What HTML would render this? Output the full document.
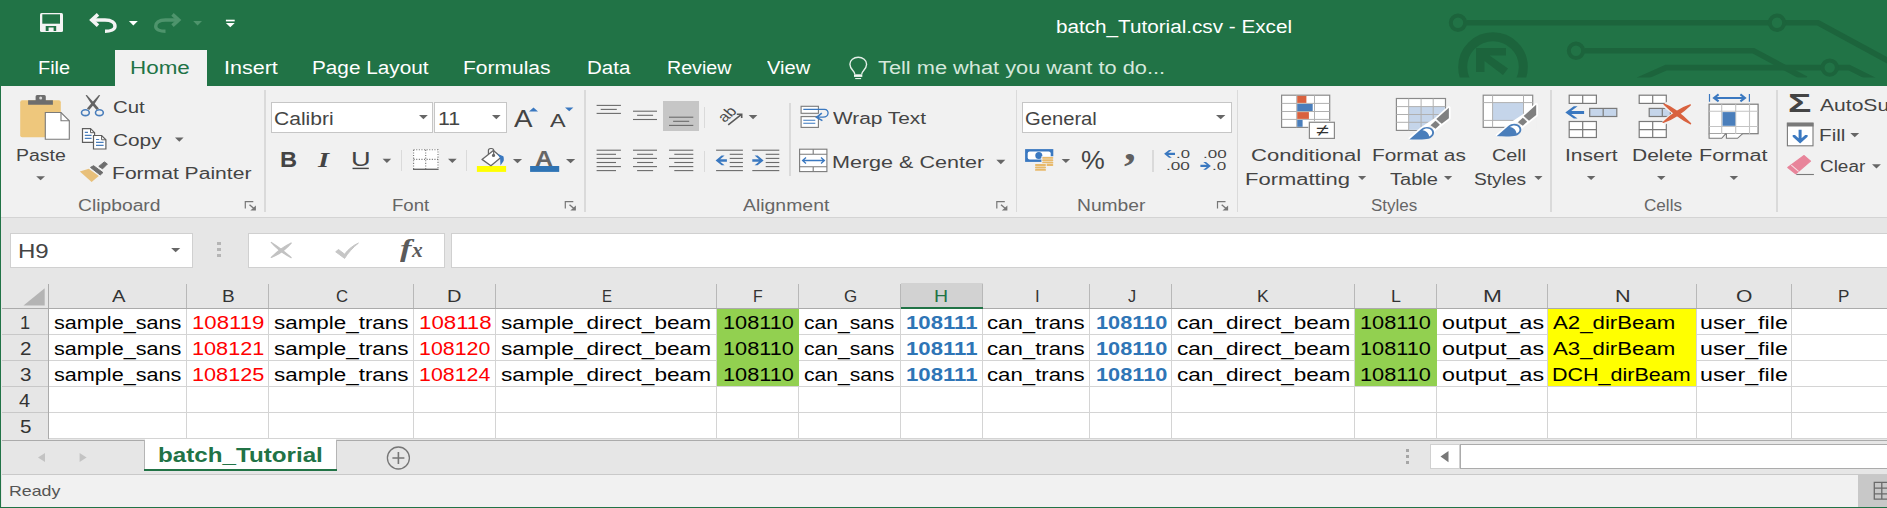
<!DOCTYPE html>
<html lang="en"><head><meta charset="utf-8"><title>batch_Tutorial.csv - Excel</title>
<style>
html,body{margin:0;padding:0}
html{overflow:hidden;width:1887px;height:508px}
body{width:1887px;height:508px;overflow:hidden;background:#e6e6e6;position:relative;font-family:"Liberation Sans", sans-serif}
.t{position:absolute;white-space:pre;line-height:1;transform-origin:0 0;display:block}
.app{position:absolute;left:0;top:0;width:1887px;height:508px;overflow:hidden;background:#e6e6e6}
.a{position:absolute}
svg{position:absolute;overflow:visible}

.sep{position:absolute;width:1.6px;background:#dadada}
.box{position:absolute;background:#fff;border:1px solid #c6c6c6;box-sizing:border-box}

</style></head><body>
<div class="app">
<div class="a" style="left:0px;top:0px;width:1887.00px;height:86.00px;background:#217346;"></div>
<div class="a" style="left:0px;top:86px;width:1887.00px;height:131.00px;background:#f1f1f1;"></div>
<div class="a" style="left:0px;top:217px;width:1887.00px;height:1.00px;background:#d4d4d4;"></div>
<div class="a" style="left:115px;top:50px;width:92.00px;height:37.00px;background:#f1f1f1;"></div>
<div class="sep" style="left:264.4px;top:90px;height:122px"></div>
<div class="sep" style="left:584.3px;top:90px;height:122px"></div>
<div class="sep" style="left:1015.8px;top:90px;height:122px"></div>
<div class="sep" style="left:1236.5px;top:90px;height:122px"></div>
<div class="sep" style="left:1550.4px;top:90px;height:122px"></div>
<div class="sep" style="left:1776.2px;top:90px;height:122px"></div>
<div class="sep" style="left:400.5px;top:150px;height:21.0px"></div>
<div class="sep" style="left:465.8px;top:150px;height:21.0px"></div>
<div class="sep" style="left:703.7px;top:107px;height:20.5px"></div>
<div class="sep" style="left:703.7px;top:151px;height:21.0px"></div>
<div class="sep" style="left:789.2px;top:103.4px;height:72.3px"></div>
<div class="sep" style="left:1152.0px;top:150.3px;height:21.4px"></div>
<div class="box" style="left:270.6px;top:102.2px;width:162.2px;height:31px"></div>
<div class="box" style="left:434px;top:102.2px;width:73px;height:31px"></div>
<div class="box" style="left:1021.6px;top:102.2px;width:210.6px;height:31px"></div>
<div class="a" style="left:663px;top:101.3px;width:36.00px;height:30.20px;background:#c6c6c6;"></div>
<div class="box" style="left:9.7px;top:233.2px;width:183.3px;height:34.4px;border-color:#d0d0d0"></div>
<div class="box" style="left:247.7px;top:233.2px;width:197.8px;height:34.4px;border-color:#d0d0d0"></div>
<div class="box" style="left:450.6px;top:233.2px;width:1450px;height:34.4px;border-color:#d0d0d0"></div>
<div class="a" style="left:217.3px;top:241.9px;width:3.60px;height:3.00px;background:#b5b5b5;"></div>
<div class="a" style="left:217.3px;top:247.8px;width:3.60px;height:3.00px;background:#b5b5b5;"></div>
<div class="a" style="left:217.3px;top:253.8px;width:3.60px;height:3.00px;background:#b5b5b5;"></div>
<div class="a" style="left:0px;top:283px;width:1887.00px;height:26.00px;background:#e6e6e6;"></div>
<div class="a" style="left:2px;top:309px;width:1885.00px;height:130.00px;background:#fff;"></div>
<div class="a" style="left:2px;top:309px;width:46.00px;height:130.00px;background:#e6e6e6;"></div>
<div class="a" style="left:900.5px;top:283.3px;width:82.50px;height:25.20px;background:#d2d2d2;"></div>
<div class="a" style="left:186px;top:309px;width:1.00px;height:130.00px;background:#d4d4d4;"></div>
<div class="a" style="left:268px;top:309px;width:1.00px;height:130.00px;background:#d4d4d4;"></div>
<div class="a" style="left:413px;top:309px;width:1.00px;height:130.00px;background:#d4d4d4;"></div>
<div class="a" style="left:495px;top:309px;width:1.00px;height:130.00px;background:#d4d4d4;"></div>
<div class="a" style="left:716px;top:309px;width:1.00px;height:130.00px;background:#d4d4d4;"></div>
<div class="a" style="left:798px;top:309px;width:1.00px;height:130.00px;background:#d4d4d4;"></div>
<div class="a" style="left:900px;top:309px;width:1.00px;height:130.00px;background:#d4d4d4;"></div>
<div class="a" style="left:982px;top:309px;width:1.00px;height:130.00px;background:#d4d4d4;"></div>
<div class="a" style="left:1089px;top:309px;width:1.00px;height:130.00px;background:#d4d4d4;"></div>
<div class="a" style="left:1171px;top:309px;width:1.00px;height:130.00px;background:#d4d4d4;"></div>
<div class="a" style="left:1354px;top:309px;width:1.00px;height:130.00px;background:#d4d4d4;"></div>
<div class="a" style="left:1436px;top:309px;width:1.00px;height:130.00px;background:#d4d4d4;"></div>
<div class="a" style="left:1547px;top:309px;width:1.00px;height:130.00px;background:#d4d4d4;"></div>
<div class="a" style="left:1696px;top:309px;width:1.00px;height:130.00px;background:#d4d4d4;"></div>
<div class="a" style="left:1791px;top:309px;width:1.00px;height:130.00px;background:#d4d4d4;"></div>
<div class="a" style="left:49px;top:334px;width:1838.00px;height:1.00px;background:#d4d4d4;"></div>
<div class="a" style="left:2px;top:334px;width:46.00px;height:1.00px;background:#c8c8c8;"></div>
<div class="a" style="left:49px;top:360px;width:1838.00px;height:1.00px;background:#d4d4d4;"></div>
<div class="a" style="left:2px;top:360px;width:46.00px;height:1.00px;background:#c8c8c8;"></div>
<div class="a" style="left:49px;top:386px;width:1838.00px;height:1.00px;background:#d4d4d4;"></div>
<div class="a" style="left:2px;top:386px;width:46.00px;height:1.00px;background:#c8c8c8;"></div>
<div class="a" style="left:49px;top:412px;width:1838.00px;height:1.00px;background:#d4d4d4;"></div>
<div class="a" style="left:2px;top:412px;width:46.00px;height:1.00px;background:#c8c8c8;"></div>
<div class="a" style="left:186px;top:284px;width:1.00px;height:24.00px;background:#b8b8b8;"></div>
<div class="a" style="left:268px;top:284px;width:1.00px;height:24.00px;background:#b8b8b8;"></div>
<div class="a" style="left:413px;top:284px;width:1.00px;height:24.00px;background:#b8b8b8;"></div>
<div class="a" style="left:495px;top:284px;width:1.00px;height:24.00px;background:#b8b8b8;"></div>
<div class="a" style="left:716px;top:284px;width:1.00px;height:24.00px;background:#b8b8b8;"></div>
<div class="a" style="left:798px;top:284px;width:1.00px;height:24.00px;background:#b8b8b8;"></div>
<div class="a" style="left:900px;top:284px;width:1.00px;height:24.00px;background:#b8b8b8;"></div>
<div class="a" style="left:982px;top:284px;width:1.00px;height:24.00px;background:#b8b8b8;"></div>
<div class="a" style="left:1089px;top:284px;width:1.00px;height:24.00px;background:#b8b8b8;"></div>
<div class="a" style="left:1171px;top:284px;width:1.00px;height:24.00px;background:#b8b8b8;"></div>
<div class="a" style="left:1354px;top:284px;width:1.00px;height:24.00px;background:#b8b8b8;"></div>
<div class="a" style="left:1436px;top:284px;width:1.00px;height:24.00px;background:#b8b8b8;"></div>
<div class="a" style="left:1547px;top:284px;width:1.00px;height:24.00px;background:#b8b8b8;"></div>
<div class="a" style="left:1696px;top:284px;width:1.00px;height:24.00px;background:#b8b8b8;"></div>
<div class="a" style="left:1791px;top:284px;width:1.00px;height:24.00px;background:#b8b8b8;"></div>
<div class="a" style="left:2px;top:308px;width:1885.00px;height:1.00px;background:#ababab;"></div>
<div class="a" style="left:48px;top:284px;width:1.30px;height:155.00px;background:#ababab;"></div>
<div class="a" style="left:900.5px;top:306.6px;width:82.50px;height:2.40px;background:#217346;"></div>
<div class="a" style="left:717.2px;top:309px;width:81.60px;height:77.30px;background:#92d050;"></div>
<div class="a" style="left:1354.8px;top:309px;width:81.90px;height:77.30px;background:#92d050;"></div>
<div class="a" style="left:1548px;top:309px;width:148.20px;height:77.30px;background:#ffff00;"></div>
<svg style="left:23px;top:287.5px" width="22" height="18"><path d="M21.7 0.3V17.5H0.5Z" fill="#b4b4b4"/></svg>
<div class="a" style="left:49px;top:438px;width:1838.00px;height:1.00px;background:#d4d4d4;"></div>
<div class="a" style="left:2px;top:439px;width:1885.00px;height:35.50px;background:#e6e6e6;"></div>
<div class="a" style="left:2px;top:439.8px;width:1885.00px;height:1.10px;background:#ababab;"></div>
<div class="a" style="left:145px;top:439px;width:191.30px;height:30.00px;background:#fff;"></div>
<div class="a" style="left:144.3px;top:440px;width:0.90px;height:29.00px;background:#b5b5b5;"></div>
<div class="a" style="left:336px;top:440px;width:0.90px;height:29.00px;background:#b5b5b5;"></div>
<div class="a" style="left:144.3px;top:468.8px;width:192.60px;height:2.00px;background:#217346;"></div>
<div class="a" style="left:2px;top:474px;width:1885.00px;height:1.00px;background:#c9c9c9;"></div>
<div class="a" style="left:2px;top:475px;width:1885.00px;height:31.50px;background:#f1f1f1;"></div>
<div class="a" style="left:0px;top:506.7px;width:1887.00px;height:1.30px;background:#217346;"></div>
<div class="a" style="left:1857.7px;top:475px;width:29.30px;height:31.50px;background:#c8c8c8;"></div>
<div class="box" style="left:1430.2px;top:444.3px;width:29.8px;height:24.4px;border-color:#d0d0d0"></div>
<div class="box" style="left:1460.3px;top:444.3px;width:440px;height:24.4px;border-color:#ababab"></div>
<div class="a" style="left:1406px;top:448.8px;width:3.00px;height:2.80px;background:#a6a6a6;"></div>
<div class="a" style="left:1406px;top:455.0px;width:3.00px;height:2.80px;background:#a6a6a6;"></div>
<div class="a" style="left:1406px;top:461.20000000000005px;width:3.00px;height:2.80px;background:#a6a6a6;"></div>
<div class="a" style="left:0px;top:86px;width:1.30px;height:422.00px;background:#217346;"></div>
<svg style="left:0;top:0" width="1887" height="508" viewBox="0 0 1887 508"><path d="M41.5 13h20a1.5 1.5 0 0 1 1.5 1.5v16a1.5 1.5 0 0 1-1.5 1.5h-20a1.5 1.5 0 0 1-1.5-1.5v-16a1.5 1.5 0 0 1 1.5-1.5z" fill="#f4f4f4"/>
<rect x="42.3" y="14.3" width="17.7" height="9.4" fill="#217346"/>
<rect x="45.7" y="26" width="10.5" height="5" fill="#217346"/><rect x="48.6" y="27.5" width="5" height="4" fill="#f4f4f4"/>
<path d="M98 14.3L91.8 20L98 25.7" fill="none" stroke="#f4f4f4" stroke-width="3.6" stroke-linejoin="miter"/>
<path d="M92.5 20H105C112 20 115 23 115 26.2C115 29.5 110.5 31.3 105 31.3" fill="none" stroke="#f4f4f4" stroke-width="3.4"/>
<path d="M128.9 21.1H137.8L133.35 25.4Z" fill="#fff"/>
<path d="M172.5 14.3L178.7 20L172.5 25.7" fill="none" stroke="#4e946c" stroke-width="3.6"/>
<path d="M178 20H165.5C158.5 20 155.7 23 155.7 26.2C155.7 29.5 160 31.3 165.5 31.3" fill="none" stroke="#4e946c" stroke-width="3.4"/>
<path d="M193.2 21.1H202L197.60 25.4Z" fill="#4e946c"/>
<rect x="225.9" y="19.7" width="8.8" height="1.7" fill="#fff"/>
<path d="M225.9 23H234.7L230.30 27.3Z" fill="#fff"/>
<rect x="20.2" y="100.2" width="40.6" height="37" rx="2" fill="#eec77c"/>
<path d="M35.6 100.2V96.4a1.5 1.5 0 0 1 1.5-1.5h7.2a1.5 1.5 0 0 1 1.5 1.5V100.2H52.9V104.7H28.1V100.2Z" fill="#6d6d6d"/>
<circle cx="40.7" cy="98" r="1.5" fill="#d8d8d8"/>
<path d="M45.3 112.5H61L69.3 120.8V139.3H45.3Z" fill="#fff" stroke="#7a7a7a" stroke-width="1.1"/>
<path d="M61 112.5V120.8H69.3" fill="none" stroke="#7a7a7a" stroke-width="1.1"/>
<path d="M36.2 176.2H45L40.60 180.3Z" fill="#666"/>
<path d="M85.6 95.2L86.9 94.9L94.6 103.6L98.9 108.4L96.6 110L91.2 103.8Z" fill="#646464"/>
<path d="M100.2 95.2L98.9 94.9L91.2 103.6L86.9 108.4L89.2 110L94.6 103.8Z" fill="#646464"/>
<ellipse cx="85.4" cy="112.7" rx="3.9" ry="2.9" fill="none" stroke="#4a7ebb" stroke-width="1.6"/><ellipse cx="99.4" cy="112.7" rx="3.9" ry="2.9" fill="none" stroke="#4a7ebb" stroke-width="1.6"/>
<path d="M82.5 128.6H90.5L94.6 132.7V142.3H82.5Z" fill="#fff" stroke="#5e5e5e" stroke-width="1.2"/><path d="M90.5 128.6V132.7H94.6" fill="none" stroke="#5e5e5e"/>
<path d="M84.8 132.3H88M84.8 135.3H91.6M84.8 138.3H91.6" stroke="#4a7ebb" stroke-width="1.2"/>
<path d="M93.5 135.5H101.6L105.9 139.8V149H93.5Z" fill="#fff" stroke="#5e5e5e" stroke-width="1.2"/><path d="M101.6 135.5V139.8H105.9" fill="none" stroke="#5e5e5e"/>
<path d="M96 139.5H99.2M96 142.4H103.6M96 145.3H103.6" stroke="#4a7ebb" stroke-width="1.2"/>
<path d="M175 137.5H183.6L179.30 141.7Z" fill="#666"/>
<path d="M79.8 171.4L88.8 168.8L98.8 176L91.6 181.9Z" fill="#e8c07a"/>
<path d="M90.5 167.4L93.6 165.7L102.9 172.6L100.2 175Z" fill="#6d6d6d" stroke="#6d6d6d" stroke-width="1" stroke-linejoin="round"/>
<path d="M98.8 166.4L104.3 161.9L107.4 164L102.6 168.8Z" fill="#6d6d6d" stroke="#6d6d6d" stroke-width="1" stroke-linejoin="round"/>
<path d="M245.3 208.6V201.6H253.3" fill="none" stroke="#777" stroke-width="1.2"/><path d="M249.5 204.79999999999998L254.8 209.29999999999998" stroke="#777" stroke-width="1.3" fill="none"/><path d="M255.9 205.4V210.4H250.3Z" fill="#777"/>
<path d="M419 115H427.8L423.40 119.3Z" fill="#666"/>
<path d="M492 115H500.6L496.30 119.3Z" fill="#666"/>
<path d="M529 111.4L533.5 107.4L538 111.4Z" fill="#3a78c0"/>
<path d="M565 107.4H573.4L569.2 111.2Z" fill="#3a78c0"/>
<rect x="352.5" y="167.7" width="16.3" height="1.4" fill="#444"/>
<path d="M382.6 158.8H391.2L386.90 163Z" fill="#666"/>
<rect x="413.1" y="149.2" width="25.4" height="20.2" fill="#fff"/>
<path d="M413.6 149.8H438V169M413.6 149.8V169M425.7 149.8V169M413.6 159.4H438" fill="none" stroke="#777" stroke-width="1.1" stroke-dasharray="1.1 1.5"/>
<path d="M413 169.3H438.6" stroke="#666" stroke-width="1.4"/>
<path d="M448 158.8H456.7L452.35 163Z" fill="#666"/>
<rect x="476.9" y="166" width="29.2" height="5.9" fill="#ffff00"/>
<path d="M482 159.4L493.4 150.5L501.2 157.2L490.9 165.7Z" fill="#fff" stroke="#666" stroke-width="1.3" stroke-linejoin="round"/>
<path d="M488.4 153.9V150.6a2.1 2.1 0 0 1 2.1-2.1h1.1a2.1 2.1 0 0 1 2.1 2.1V155" fill="none" stroke="#666" stroke-width="1.2"/>
<circle cx="493.5" cy="155.4" r="1.6" fill="#666"/>
<path d="M497.3 153.7L503.3 156.2C504 158 503.9 160 503.6 161.1L500.5 165.4L500.1 158.2Z" fill="#3a78c0"/>
<path d="M512.9 159H522.1L517.50 163.2Z" fill="#666"/>
<rect x="530.1" y="166" width="29.1" height="5.9" fill="#2e74b5"/>
<path d="M566 159H575.2L570.60 163.2Z" fill="#666"/>
<path d="M565.3 208.6V201.6H573.3" fill="none" stroke="#777" stroke-width="1.2"/><path d="M569.5 204.79999999999998L574.8 209.29999999999998" stroke="#777" stroke-width="1.3" fill="none"/><path d="M575.9 205.4V210.4H570.3Z" fill="#777"/>
<path d="M596.6 105.4H620.9" stroke="#6a6a6a" stroke-width="1.1"/>
<path d="M600.7 109.4H616.8" stroke="#6a6a6a" stroke-width="1.1"/>
<path d="M596.6 113.4H620.9" stroke="#6a6a6a" stroke-width="1.1"/>
<path d="M633.0 111.2H657.0" stroke="#6a6a6a" stroke-width="1.1"/>
<path d="M637.1 115.3H653.1" stroke="#6a6a6a" stroke-width="1.1"/>
<path d="M633.0 119.5H657.0" stroke="#6a6a6a" stroke-width="1.1"/>
<path d="M669.0 117.2H693.3" stroke="#6a6a6a" stroke-width="1.1"/>
<path d="M673.1 121.3H689.2" stroke="#6a6a6a" stroke-width="1.1"/>
<path d="M669.0 125.4H693.3" stroke="#6a6a6a" stroke-width="1.1"/>
<path d="M596.6 150.2H620.9" stroke="#6a6a6a" stroke-width="1.1"/>
<path d="M633.0 150.2H657.0" stroke="#6a6a6a" stroke-width="1.1"/>
<path d="M669.0 150.2H693.3" stroke="#6a6a6a" stroke-width="1.1"/>
<path d="M716.1 150.2H742.9" stroke="#6a6a6a" stroke-width="1.1"/>
<path d="M752.3 150.2H779.3" stroke="#6a6a6a" stroke-width="1.1"/>
<path d="M596.6 154.3H616.0" stroke="#6a6a6a" stroke-width="1.1"/>
<path d="M637.1 154.3H653.1" stroke="#6a6a6a" stroke-width="1.1"/>
<path d="M674.3 154.3H693.3" stroke="#6a6a6a" stroke-width="1.1"/>
<path d="M729.7 154.3H742.9" stroke="#6a6a6a" stroke-width="1.1"/>
<path d="M765.7 154.3H779.3" stroke="#6a6a6a" stroke-width="1.1"/>
<path d="M596.6 158.4H620.9" stroke="#6a6a6a" stroke-width="1.1"/>
<path d="M633.0 158.4H657.0" stroke="#6a6a6a" stroke-width="1.1"/>
<path d="M669.0 158.4H693.3" stroke="#6a6a6a" stroke-width="1.1"/>
<path d="M729.7 158.4H742.9" stroke="#6a6a6a" stroke-width="1.1"/>
<path d="M765.7 158.4H779.3" stroke="#6a6a6a" stroke-width="1.1"/>
<path d="M596.6 162.5H616.0" stroke="#6a6a6a" stroke-width="1.1"/>
<path d="M637.1 162.5H653.1" stroke="#6a6a6a" stroke-width="1.1"/>
<path d="M674.3 162.5H693.3" stroke="#6a6a6a" stroke-width="1.1"/>
<path d="M729.7 162.5H742.9" stroke="#6a6a6a" stroke-width="1.1"/>
<path d="M765.7 162.5H779.3" stroke="#6a6a6a" stroke-width="1.1"/>
<path d="M596.6 166.6H620.9" stroke="#6a6a6a" stroke-width="1.1"/>
<path d="M633.0 166.6H657.0" stroke="#6a6a6a" stroke-width="1.1"/>
<path d="M669.0 166.6H693.3" stroke="#6a6a6a" stroke-width="1.1"/>
<path d="M729.7 166.6H742.9" stroke="#6a6a6a" stroke-width="1.1"/>
<path d="M765.7 166.6H779.3" stroke="#6a6a6a" stroke-width="1.1"/>
<path d="M596.6 170.6H616.0" stroke="#6a6a6a" stroke-width="1.1"/>
<path d="M637.1 170.6H653.1" stroke="#6a6a6a" stroke-width="1.1"/>
<path d="M674.3 170.6H693.3" stroke="#6a6a6a" stroke-width="1.1"/>
<path d="M716.1 170.6H742.9" stroke="#6a6a6a" stroke-width="1.1"/>
<path d="M752.3 170.6H779.3" stroke="#6a6a6a" stroke-width="1.1"/>
<path d="M715.6 160.5L721.6 155.6H724.6L720.2 159.2H726.9V161.8H720.2L724.6 165.3H721.6Z" fill="#3a78c0"/>
<path d="M763.6 160.5L757.6 155.6H754.6L759 159.2H752.3V161.8H759L754.6 165.3H757.6Z" fill="#3a78c0"/>
<path d="M728.2 124.9L741.2 114.6M736.8 114.3H741.7V118" fill="none" stroke="#5a5a5a" stroke-width="1.6"/>
<path d="M748.7 115H757.4L753.05 119.2Z" fill="#666"/>
<rect x="801.1" y="106.3" width="17.3" height="7" fill="#fff" stroke="#7a7a7a" stroke-width="1.1"/>
<rect x="801.1" y="116.6" width="17.3" height="10.8" fill="#fff" stroke="#7a7a7a" stroke-width="1.1"/>
<path d="M803.3 109.4H824.5C829.5 109.4 829.5 117.2 823 117.2H818" fill="none" stroke="#3a78c0" stroke-width="1.3"/>
<path d="M821.8 113.2L816.6 117.4L822.4 120.6" fill="none" stroke="#3a78c0" stroke-width="1.6"/>
<path d="M803.3 120.3H815.3M803.3 123.3H815.3" stroke="#3a78c0" stroke-width="1.1"/>
<rect x="799.6" y="149.2" width="27.3" height="22.4" fill="#fff" stroke="#7a7a7a" stroke-width="1.1"/>
<path d="M799.6 154.2H826.9M799.6 166.7H826.9M813.2 149.2V154.2M813.2 166.7V171.6" stroke="#7a7a7a" stroke-width="1.1" fill="none"/>
<path d="M803 160.5H824M806 157.6L802.6 160.5L806 163.4M821 157.6L824.4 160.5L821 163.4" fill="none" stroke="#3a78c0" stroke-width="1.3"/>
<path d="M996.3 159.8H1005.3L1000.80 164.2Z" fill="#666"/>
<path d="M996.8 208.6V201.6H1004.8" fill="none" stroke="#777" stroke-width="1.2"/><path d="M1001.0 204.79999999999998L1006.3 209.29999999999998" stroke="#777" stroke-width="1.3" fill="none"/><path d="M1007.4 205.4V210.4H1001.8Z" fill="#777"/>
<path d="M1216 115H1225.4L1220.70 119.3Z" fill="#666"/>
<rect x="1025.1" y="149.1" width="28.2" height="12.8" fill="#3a78c0"/>
<rect x="1027.7" y="151.6" width="23" height="7.8" rx="2" fill="#fff"/>
<circle cx="1038.8" cy="155.4" r="3.5" fill="#3a78c0"/>
<rect x="1041.4" y="156.2" width="12.6" height="10.4" fill="#f1f1f1"/>
<rect x="1042.2" y="156.9" width="11.1" height="1.9" rx="0.9" fill="#e8b96a"/>
<rect x="1042.2" y="159.3" width="11.1" height="1.9" rx="0.9" fill="#e8b96a"/>
<rect x="1042.2" y="161.7" width="11.1" height="1.9" rx="0.9" fill="#e8b96a"/>
<rect x="1042.2" y="164.1" width="11.1" height="1.9" rx="0.9" fill="#e8b96a"/>
<rect x="1034.3" y="163.4" width="12.4" height="8" fill="#f1f1f1"/>
<rect x="1035" y="164.1" width="11" height="1.9" rx="0.9" fill="#e8b96a"/>
<rect x="1035" y="166.5" width="11" height="1.9" rx="0.9" fill="#e8b96a"/>
<rect x="1035" y="168.9" width="11" height="1.9" rx="0.9" fill="#e8b96a"/>
<path d="M1061.6 158.9H1070.1L1065.85 163.1Z" fill="#666"/>
<path d="M1164.1 153.8L1169 149.9H1171.8L1168.2 152.7H1175V154.9H1168.2L1171.8 157.7H1169Z" fill="#3a78c0"/>
<path d="M1210.9 165.9L1206 162H1203.2L1206.8 164.8H1200.4V167H1206.8L1203.2 169.8H1206Z" fill="#3a78c0"/>
<path d="M1217.5 208.6V201.6H1225.5" fill="none" stroke="#777" stroke-width="1.2"/><path d="M1221.7 204.79999999999998L1227.0 209.29999999999998" stroke="#777" stroke-width="1.3" fill="none"/><path d="M1228.1 205.4V210.4H1222.5Z" fill="#777"/>
<rect x="1281.6" y="95.2" width="48.1" height="32.2" fill="#fff" stroke="#8a8a8a" stroke-width="1.2"/>
<path d="M1296.7 95.2V127.4M1314.5 95.2V127.4M1281.6 103.4H1329.7M1281.6 111.5H1329.7M1281.6 119.4H1329.7" stroke="#b0b0b0" stroke-width="1" fill="none"/>
<rect x="1297.2" y="95.9" width="9.2" height="7" fill="#d9623f"/><rect x="1297.2" y="104" width="15.5" height="7" fill="#4a7ebb"/>
<rect x="1297.2" y="112.1" width="11.7" height="6.8" fill="#d9623f"/><rect x="1297.2" y="120" width="5.4" height="6.8" fill="#4a7ebb"/>
<rect x="1308.3" y="121.2" width="27.2" height="18.3" fill="#f1f1f1"/><rect x="1309.4" y="122.3" width="25" height="16.1" fill="#fff" stroke="#8a8a8a" stroke-width="1.2"/>
<path d="M1358 176H1366.2L1362.10 180Z" fill="#666"/>
<rect x="1396.4" y="98.5" width="49.1" height="31.9" fill="#fff" stroke="#8a8a8a" stroke-width="1.2"/>
<rect x="1408.7" y="106.6" width="36.2" height="23.2" fill="#c5d5ea"/>
<path d="M1408.7 98.5V130.4M1421.1 98.5V130.4M1433.2 98.5V130.4M1396.4 106.6H1445.5M1396.4 114.5H1445.5M1396.4 122.3H1445.5" stroke="#b0b0b0" stroke-width="1" fill="none"/>
<g transform="translate(0 0)"><path d="M1449.5 107.2L1436.3 119.1L1422.2 128.4L1417.5 132.2H1449.5Z" fill="#f1f1f1"/><path d="M1409.3 139.4L1422.2 128.4L1436.3 119.1L1448.9 107.8V118.2L1435.5 128.8L1430 134" fill="none" stroke="#fff" stroke-width="3.5" stroke-linejoin="round"/><path d="M1436.3 119.1L1448.9 107.8V118.2L1441.7 123.8Z" fill="#808080"/><path d="M1430.6 125.3L1435.5 120.8L1439.9 124.8L1435.5 128.8Z" fill="#808080"/><path d="M1409.3 139.4L1421 129.2C1425 125.7 1431 126.6 1433.3 130C1435.3 133.5 1433 137.5 1428.5 138.8C1425 139.8 1418 139.6 1409.3 139.4Z" fill="#4a7ebb"/><path d="M1422.5 130.2C1425.5 127.8 1429.8 128.2 1431.6 130.8C1433 133.2 1431.5 135.6 1429.2 136.6C1429 133.5 1426.5 130.8 1422.5 130.2Z" fill="#fff"/></g>
<path d="M1444 176H1452.2L1448.10 180Z" fill="#666"/>
<rect x="1483.2" y="95.2" width="49.5" height="32.2" fill="#fff" stroke="#8a8a8a" stroke-width="1.2"/>
<rect x="1492.6" y="102.6" width="30.9" height="17.8" fill="#c5d5ea"/>
<path d="M1492.6 95.2V127.4M1523.5 95.2V127.4M1483.2 102.6H1532.7M1483.2 120.4H1532.7" stroke="#b0b0b0" stroke-width="1" fill="none"/>
<g transform="translate(87.3 -3.1)"><path d="M1449.5 107.2L1436.3 119.1L1422.2 128.4L1417.5 132.2H1449.5Z" fill="#f1f1f1"/><path d="M1409.3 139.4L1422.2 128.4L1436.3 119.1L1448.9 107.8V118.2L1435.5 128.8L1430 134" fill="none" stroke="#fff" stroke-width="3.5" stroke-linejoin="round"/><path d="M1436.3 119.1L1448.9 107.8V118.2L1441.7 123.8Z" fill="#808080"/><path d="M1430.6 125.3L1435.5 120.8L1439.9 124.8L1435.5 128.8Z" fill="#808080"/><path d="M1409.3 139.4L1421 129.2C1425 125.7 1431 126.6 1433.3 130C1435.3 133.5 1433 137.5 1428.5 138.8C1425 139.8 1418 139.6 1409.3 139.4Z" fill="#4a7ebb"/><path d="M1422.5 130.2C1425.5 127.8 1429.8 128.2 1431.6 130.8C1433 133.2 1431.5 135.6 1429.2 136.6C1429 133.5 1426.5 130.8 1422.5 130.2Z" fill="#fff"/></g>
<path d="M1534.3 176H1542.5L1538.40 180Z" fill="#666"/>
<rect x="1569.2" y="95.2" width="27.2" height="8.2" fill="#fff" stroke="#7a7a7a" stroke-width="1.2"/>
<path d="M1582.7 95.2V103.4" stroke="#7a7a7a" stroke-width="1.2" fill="none"/>
<rect x="1589.7" y="108.4" width="27.1" height="8.1" fill="#c5d5ea" stroke="#7a7a7a" stroke-width="1.2"/>
<path d="M1603.2 108.4V116.5" stroke="#7a7a7a" stroke-width="1.2" fill="none"/>
<rect x="1569.2" y="121.5" width="27.2" height="16.0" fill="#fff" stroke="#7a7a7a" stroke-width="1.2"/>
<path d="M1582.7 121.5V137.5M1569.2 129.6H1596.4" stroke="#7a7a7a" stroke-width="1.2" fill="none"/>
<path d="M1565.3 112.4L1573.8 106.3H1577.6L1571.2 111H1584.1V113.9H1571.2L1577.6 118.6H1573.8Z" fill="#3a78c0"/>
<path d="M1586.9 176H1595.4L1591.15 180Z" fill="#666"/>
<rect x="1639.2" y="95.2" width="27.1" height="8.2" fill="#fff" stroke="#7a7a7a" stroke-width="1.2"/>
<path d="M1652.7 95.2V103.4" stroke="#7a7a7a" stroke-width="1.2" fill="none"/>
<rect x="1649.2" y="108.4" width="21.2" height="8.1" fill="#c5d5ea" stroke="#7a7a7a" stroke-width="1.2"/>
<path d="M1662.3 108.4V116.5" stroke="#7a7a7a" stroke-width="1.2" fill="none"/>
<rect x="1639.2" y="121.5" width="27.1" height="16.0" fill="#fff" stroke="#7a7a7a" stroke-width="1.2"/>
<path d="M1652.7 121.5V137.5M1639.2 129.6H1666.3" stroke="#7a7a7a" stroke-width="1.2" fill="none"/>
<path d="M1664.2 104.2L1690.4 123.6M1690.3 105L1663.2 122.4" stroke="#f1f1f1" stroke-width="6" fill="none"/>
<path d="M1664.2 104.2C1672 107 1683 116 1690.4 123.6C1681 119 1671 111 1664.2 104.2Z" fill="#d9623f" stroke="#d9623f" stroke-width="1.6" stroke-linejoin="round"/>
<path d="M1690.3 105C1681 108 1670 116 1663.2 122.4C1672 119.5 1683 112 1690.3 105Z" fill="#d9623f" stroke="#d9623f" stroke-width="1.4" stroke-linejoin="round"/>
<path d="M1657 176H1665.5L1661.25 180Z" fill="#666"/>
<rect x="1709.1" y="104.2" width="49" height="29.5" fill="#fff" stroke="#7a7a7a" stroke-width="1.2"/>
<path d="M1721.7 104.2V133.7M1735.7 104.2V133.7M1749.5 104.2V133.7M1709.1 111.3H1758.1M1709.1 126.5H1758.1" stroke="#c4c4c4" stroke-width="1.1" fill="none"/>
<rect x="1722.5" y="112.1" width="12.8" height="13.7" fill="#4a7ebb"/>
<path d="M1709.1 133.7V138.3H1721.7L1725.8 133.7M1726.4 133.7V138.3H1737.5L1742.7 133.7" fill="#fff" stroke="#7a7a7a" stroke-width="1.1"/>
<path d="M1709.5 94.1V101.7M1749.4 94.1V101.7" stroke="#3a78c0" stroke-width="1.2"/>
<path d="M1714.5 97.9H1744.5M1718.6 94.4L1714 97.9L1718.6 101.4M1740.4 94.4L1745 97.9L1740.4 101.4" fill="none" stroke="#3a78c0" stroke-width="2"/>
<path d="M1729.6 176H1738.1L1733.85 180Z" fill="#666"/>
<rect x="1787.4" y="123.2" width="25.6" height="22.6" fill="#fff" stroke="#7a7a7a" stroke-width="1.1"/>
<rect x="1786.9" y="122.7" width="26.6" height="3.8" fill="#7a7a7a"/>
<path d="M1798.6 129.7H1801.6V138.2L1805.2 135H1807.6V136.8L1800.1 143.5L1792.7 136.8V135H1795L1798.6 138.2Z" fill="#3a78c0"/>
<path d="M1850.3 133H1859.2L1854.75 137.2Z" fill="#666"/>
<path d="M1787.8 167.6L1804.1 155.6L1810.5 161.1L1795.7 173.7Z" fill="#e8849a" stroke="#e8849a" stroke-width="1.2" stroke-linejoin="round"/>
<path d="M1791.3 165.2L1798.6 171.3" stroke="#f6dfe4" stroke-width="1.1"/>
<path d="M1796.3 174.5H1813.9" stroke="#7a7a7a" stroke-width="1.1"/>
<path d="M1872 164.3H1880.9L1876.45 168.5Z" fill="#666"/>
<g fill="none" stroke="#1c643c" stroke-width="5.6" clip-path="url(#tclip)"><circle cx="1458" cy="22.7" r="7.2" stroke-width="4"/><path d="M1466.5 22.7H1769.5M1784.5 22.7H1818L1892 63"/><circle cx="1777" cy="22.7" r="7.2" stroke-width="4"/><circle cx="1576" cy="50.8" r="7.2" stroke-width="4"/><path d="M1584.5 50.8H1753.5L1806 79"/><path d="M1638 80L1666 67.6H1821.5M1838 67.6H1849L1874 80"/><circle cx="1829.7" cy="67.6" r="7.2" stroke-width="4"/><circle cx="1493" cy="67" r="30.3" stroke-width="9"/></g>
<g clip-path="url(#tclip)"><path d="M1476 48H1506V55.5H1489.5L1508 68.5L1503 75L1484.5 61V72H1476Z" fill="#1c643c"/></g>
<defs><clipPath id="tclip"><rect x="1400" y="0" width="487" height="77.5"/></clipPath></defs>
<path d="M854.8 74.2C854.8 71 850 69.5 849.9 64.2A8.35 6.9 0 0 1 866.6 64.2C866.5 69.5 861.7 71 861.7 74.2" fill="none" stroke="#e4efe8" stroke-width="1.4"/>
<rect x="854" y="74.3" width="8.3" height="2.6" fill="#f2f7f3"/><rect x="855.2" y="78" width="5.9" height="1.1" fill="#e4efe8"/>
<path d="M171.1 247.9H180.2L175.65 252.2Z" fill="#666"/>
<path d="M271.3 242.4C278 246.5 285.5 252.5 291.2 257.6C284 254 276.5 248.5 271.3 242.4Z" fill="#c2c2c2" stroke="#c2c2c2" stroke-width="1.2" stroke-linejoin="round"/>
<path d="M291.2 243C284 246.5 276.5 252 271.3 257.5C278.5 254.5 286 249 291.2 243Z" fill="#c2c2c2" stroke="#c2c2c2" stroke-width="1.2" stroke-linejoin="round"/>
<path d="M335.7 251.8L338.5 249.5L344.6 254.2C348 249.5 353 245.5 358.4 243.1C353 247.5 348 252.8 344.6 258.4Z" fill="#c6c6c6" stroke="#c6c6c6" stroke-width="1" stroke-linejoin="round"/>
<path d="M45 453V462L38 457.5Z" fill="#c3c3c3"/><path d="M79.6 453V462L86.6 457.5Z" fill="#c3c3c3"/>
<circle cx="398.4" cy="458" r="11" fill="none" stroke="#767676" stroke-width="1.3"/><path d="M392.4 458H404.4M398.4 452V464" stroke="#767676" stroke-width="1.6"/>
<path d="M1448.5 451V462.3L1440.5 456.6Z" fill="#777"/>
<path d="M1874.3 482.3H1890V499.2H1874.3ZM1874.3 488.2H1890M1874.3 493.8H1890M1881.8 482.3V499.2" fill="none" stroke="#6a6a6a" stroke-width="1.3"/></svg>
<span class="t" style="left:38.30px;top:59.01px;font-size:18px;color:#fff;transform:scaleX(1.1038);">File</span>
<span class="t" style="left:130.26px;top:59.01px;font-size:18px;color:#217346;transform:scaleX(1.2446);">Home</span>
<span class="t" style="left:224.20px;top:59.01px;font-size:18px;color:#fff;transform:scaleX(1.1950);">Insert</span>
<span class="t" style="left:312.25px;top:59.01px;font-size:18px;color:#fff;transform:scaleX(1.1521);">Page Layout</span>
<span class="t" style="left:463.43px;top:59.01px;font-size:18px;color:#fff;transform:scaleX(1.1673);">Formulas</span>
<span class="t" style="left:586.56px;top:59.01px;font-size:18px;color:#fff;transform:scaleX(1.1392);">Data</span>
<span class="t" style="left:666.51px;top:59.01px;font-size:18px;color:#fff;transform:scaleX(1.0912);">Review</span>
<span class="t" style="left:767.00px;top:59.01px;font-size:18px;color:#fff;transform:scaleX(1.1161);">View</span>
<span class="t" style="left:877.70px;top:59.01px;font-size:18px;color:#d5e8dc;transform:scaleX(1.2108);">Tell me what you want to do...</span>
<span class="t" style="left:1056.05px;top:18.01px;font-size:18px;color:#fff;transform:scaleX(1.1489);">batch_Tutorial.csv - Excel</span>
<span class="t" style="left:15.87px;top:147.00px;font-size:17.3px;color:#444;transform:scaleX(1.1273);">Paste</span>
<span class="t" style="left:113.00px;top:99.00px;font-size:17.3px;color:#444;transform:scaleX(1.1812);">Cut</span>
<span class="t" style="left:113.00px;top:132.00px;font-size:17.3px;color:#444;transform:scaleX(1.2039);">Copy</span>
<span class="t" style="left:111.78px;top:165.00px;font-size:17.3px;color:#444;transform:scaleX(1.2199);">Format Painter</span>
<span class="t" style="left:77.60px;top:198.00px;font-size:16px;color:#666;transform:scaleX(1.2044);">Clipboard</span>
<span class="t" style="left:274.40px;top:110.01px;font-size:18.7px;color:#444;transform:scaleX(1.1272);">Calibri</span>
<span class="t" style="left:437.66px;top:110.01px;font-size:18.7px;color:#444;transform:scaleX(1.1441);">11</span>
<span class="t" style="left:513.70px;top:108.01px;font-size:23px;color:#444;transform:scaleX(1.2062);">A</span>
<span class="t" style="left:550.40px;top:112.01px;font-size:18px;color:#444;transform:scaleX(1.3000);">A</span>
<span class="t" style="left:279.80px;top:150.00px;font-size:21.5px;color:#444;font-weight:700;transform:scaleX(1.1000);">B</span>
<span class="t" style="left:317.90px;top:149.01px;font-size:22px;color:#444;font-weight:700;font-style:italic;font-family:'Liberation Serif', serif;transform:scaleX(1.3000);">I</span>
<span class="t" style="left:351.14px;top:149.01px;font-size:20px;color:#444;transform:scaleX(1.3583);">U</span>
<span class="t" style="left:534.80px;top:148.00px;font-size:22px;color:#666;font-weight:700;transform:scaleX(1.1313);">A</span>
<span class="t" style="left:392.14px;top:198.00px;font-size:16px;color:#666;transform:scaleX(1.1625);">Font</span>
<span class="t" style="left:832.70px;top:110.00px;font-size:17.3px;color:#444;transform:scaleX(1.2064);">Wrap Text</span>
<span class="t" style="left:832.35px;top:154.00px;font-size:17.3px;color:#444;transform:scaleX(1.2473);">Merge &amp; Center</span>
<span class="t" style="left:743.30px;top:198.00px;font-size:16px;color:#666;transform:scaleX(1.2133);">Alignment</span>
<span class="t" style="left:1025.40px;top:110.01px;font-size:18.7px;color:#444;transform:scaleX(1.0806);">General</span>
<span class="t" style="left:1081.00px;top:148.00px;font-size:25px;color:#444;transform:scaleX(1.0682);">%</span>
<span class="t" style="left:1123.70px;top:127.01px;font-size:40px;color:#606060;font-weight:700;font-family:'Liberation Serif', serif;transform:scaleX(1.1778);">,</span>
<span class="t" style="left:1176.29px;top:149.01px;font-size:11px;color:#444;transform:scaleX(1.5144);">.0</span>
<span class="t" style="left:1166.34px;top:161.00px;font-size:11px;color:#444;transform:scaleX(1.5592);">.00</span>
<span class="t" style="left:1202.75px;top:149.01px;font-size:11px;color:#444;transform:scaleX(1.5451);">.00</span>
<span class="t" style="left:1212.15px;top:161.00px;font-size:11px;color:#444;transform:scaleX(1.5516);">.0</span>
<span class="t" style="left:0.00px;top:-124.18px;font-size:14px;color:#4a4a4a;left:719.2px;top:107.3px;transform:scaleX(1.2) rotate(-45deg);transform-origin:50% 50%;">ab</span>
<span class="t" style="left:1788.11px;top:90.02px;font-size:26px;color:#444;font-weight:700;transform:scaleX(1.4929);">Σ</span>
<span class="t" style="left:1076.80px;top:198.00px;font-size:16px;color:#666;transform:scaleX(1.2019);">Number</span>
<span class="t" style="left:1251.40px;top:147.00px;font-size:17.3px;color:#444;transform:scaleX(1.2753);">Conditional</span>
<span class="t" style="left:1245.33px;top:171.00px;font-size:17.3px;color:#444;transform:scaleX(1.2719);">Formatting</span>
<span class="t" style="left:1371.99px;top:147.00px;font-size:17.3px;color:#444;transform:scaleX(1.2069);">Format as</span>
<span class="t" style="left:1389.80px;top:171.00px;font-size:17.3px;color:#444;transform:scaleX(1.1597);">Table</span>
<span class="t" style="left:1491.80px;top:147.00px;font-size:17.3px;color:#444;transform:scaleX(1.1476);">Cell</span>
<span class="t" style="left:1474.00px;top:171.00px;font-size:17.3px;color:#444;transform:scaleX(1.1093);">Styles</span>
<span class="t" style="left:1370.50px;top:198.00px;font-size:16px;color:#666;transform:scaleX(1.0627);">Styles</span>
<span class="t" style="left:1564.78px;top:147.00px;font-size:17.3px;color:#444;transform:scaleX(1.2164);">Insert</span>
<span class="t" style="left:1631.78px;top:147.00px;font-size:17.3px;color:#444;transform:scaleX(1.2163);">Delete</span>
<span class="t" style="left:1699.35px;top:147.00px;font-size:17.3px;color:#444;transform:scaleX(1.2498);">Format</span>
<span class="t" style="left:1644.40px;top:198.00px;font-size:16px;color:#666;transform:scaleX(1.0685);">Cells</span>
<span class="t" style="left:1819.80px;top:97.00px;font-size:17.3px;color:#444;transform:scaleX(1.2195);">AutoSum</span>
<span class="t" style="left:1818.60px;top:127.01px;font-size:17.3px;color:#444;transform:scaleX(1.1960);">Fill</span>
<span class="t" style="left:1819.80px;top:158.00px;font-size:17.3px;color:#444;transform:scaleX(1.0953);">Clear</span>
<span class="t" style="left:1316.00px;top:122.00px;font-size:17px;color:#333;transform:scaleX(1.3556);">≠</span>
<span class="t" style="left:18.05px;top:242.01px;font-size:19.3px;color:#444;transform:scaleX(1.2476);">H9</span>
<span class="t" style="left:400.00px;top:237.02px;font-size:24.5px;color:#5a5a5a;font-weight:700;font-style:italic;font-family:'Liberation Serif', serif;transform:scaleX(1.4091);">f</span>
<span class="t" style="left:411.82px;top:240.02px;font-size:21px;color:#5a5a5a;font-weight:700;font-style:italic;font-family:'Liberation Serif', serif;transform:scaleX(1.0182);">x</span>
<span class="t" style="left:111.60px;top:289.00px;font-size:16px;color:#333;transform:scaleX(1.2636);">A</span>
<span class="t" style="left:222.11px;top:289.00px;font-size:16px;color:#333;transform:scaleX(1.1889);">B</span>
<span class="t" style="left:335.50px;top:289.00px;font-size:16px;color:#333;transform:scaleX(1.0455);">C</span>
<span class="t" style="left:447.45px;top:289.00px;font-size:16px;color:#333;transform:scaleX(1.2500);">D</span>
<span class="t" style="left:602.47px;top:289.00px;font-size:16px;color:#333;transform:scaleX(0.9333);">E</span>
<span class="t" style="left:752.51px;top:289.00px;font-size:16px;color:#333;transform:scaleX(0.9889);">F</span>
<span class="t" style="left:843.80px;top:289.00px;font-size:16px;color:#333;transform:scaleX(1.0583);">G</span>
<span class="t" style="left:934.18px;top:289.00px;font-size:16px;color:#217346;transform:scaleX(1.2200);">H</span>
<span class="t" style="left:1034.55px;top:289.00px;font-size:16px;color:#333;transform:scaleX(1.0500);">I</span>
<span class="t" style="left:1127.90px;top:289.00px;font-size:16px;color:#333;transform:scaleX(1.0143);">J</span>
<span class="t" style="left:1256.90px;top:289.00px;font-size:16px;color:#333;transform:scaleX(1.1000);">K</span>
<span class="t" style="left:1390.59px;top:289.00px;font-size:16px;color:#333;transform:scaleX(1.1125);">L</span>
<span class="t" style="left:1483.18px;top:289.00px;font-size:16px;color:#333;transform:scaleX(1.4167);">M</span>
<span class="t" style="left:1614.75px;top:289.00px;font-size:16px;color:#333;transform:scaleX(1.3500);">N</span>
<span class="t" style="left:1735.90px;top:289.00px;font-size:16px;color:#333;transform:scaleX(1.3167);">O</span>
<span class="t" style="left:1838.43px;top:289.00px;font-size:16px;color:#333;transform:scaleX(1.0667);">P</span>
<span class="t" style="left:19.86px;top:315.00px;font-size:17.5px;color:#333;transform:scaleX(1.0375);">1</span>
<span class="t" style="left:19.60px;top:341.00px;font-size:17.5px;color:#333;transform:scaleX(1.1778);">2</span>
<span class="t" style="left:19.60px;top:367.00px;font-size:17.5px;color:#333;transform:scaleX(1.1778);">3</span>
<span class="t" style="left:19.20px;top:393.00px;font-size:17.5px;color:#333;transform:scaleX(1.1400);">4</span>
<span class="t" style="left:19.60px;top:419.00px;font-size:17.5px;color:#333;transform:scaleX(1.1778);">5</span>
<span class="t" style="left:54.00px;top:315.00px;font-size:17.5px;color:#000;transform:scaleX(1.2345);">sample_sans</span>
<span class="t" style="left:191.93px;top:315.00px;font-size:17.5px;color:#ff0000;transform:scaleX(1.2680);">108119</span>
<span class="t" style="left:273.80px;top:315.00px;font-size:17.5px;color:#000;transform:scaleX(1.2801);">sample_trans</span>
<span class="t" style="left:418.73px;top:315.00px;font-size:17.5px;color:#ff0000;transform:scaleX(1.2716);">108118</span>
<span class="t" style="left:500.90px;top:315.00px;font-size:17.5px;color:#000;transform:scaleX(1.2930);">sample_direct_beam</span>
<span class="t" style="left:722.96px;top:315.00px;font-size:17.5px;color:#000;transform:scaleX(1.2419);">108110</span>
<span class="t" style="left:803.60px;top:315.00px;font-size:17.5px;color:#000;transform:scaleX(1.2040);">can_sans</span>
<span class="t" style="left:905.53px;top:315.00px;font-size:17.5px;color:#2e75b6;font-weight:700;transform:scaleX(1.2668);">108111</span>
<span class="t" style="left:987.20px;top:315.00px;font-size:17.5px;color:#000;transform:scaleX(1.2684);">can_trans</span>
<span class="t" style="left:1095.66px;top:315.00px;font-size:17.5px;color:#2e75b6;font-weight:700;transform:scaleX(1.2417);">108110</span>
<span class="t" style="left:1176.70px;top:315.00px;font-size:17.5px;color:#000;transform:scaleX(1.2905);">can_direct_beam</span>
<span class="t" style="left:1360.16px;top:315.00px;font-size:17.5px;color:#000;transform:scaleX(1.2419);">108110</span>
<span class="t" style="left:1441.90px;top:315.00px;font-size:17.5px;color:#000;transform:scaleX(1.3291);">output_as</span>
<span class="t" style="left:1552.50px;top:315.00px;font-size:17.5px;color:#000;transform:scaleX(1.2703);">A2_dirBeam</span>
<span class="t" style="left:1699.97px;top:315.00px;font-size:17.5px;color:#000;transform:scaleX(1.3274);">user_file</span>
<span class="t" style="left:54.00px;top:341.00px;font-size:17.5px;color:#000;transform:scaleX(1.2345);">sample_sans</span>
<span class="t" style="left:191.96px;top:341.00px;font-size:17.5px;color:#ff0000;transform:scaleX(1.2389);">108121</span>
<span class="t" style="left:273.80px;top:341.00px;font-size:17.5px;color:#000;transform:scaleX(1.2801);">sample_trans</span>
<span class="t" style="left:418.78px;top:341.00px;font-size:17.5px;color:#ff0000;transform:scaleX(1.2209);">108120</span>
<span class="t" style="left:500.90px;top:341.00px;font-size:17.5px;color:#000;transform:scaleX(1.2930);">sample_direct_beam</span>
<span class="t" style="left:722.96px;top:341.00px;font-size:17.5px;color:#000;transform:scaleX(1.2419);">108110</span>
<span class="t" style="left:803.60px;top:341.00px;font-size:17.5px;color:#000;transform:scaleX(1.2040);">can_sans</span>
<span class="t" style="left:905.53px;top:341.00px;font-size:17.5px;color:#2e75b6;font-weight:700;transform:scaleX(1.2668);">108111</span>
<span class="t" style="left:987.20px;top:341.00px;font-size:17.5px;color:#000;transform:scaleX(1.2684);">can_trans</span>
<span class="t" style="left:1095.66px;top:341.00px;font-size:17.5px;color:#2e75b6;font-weight:700;transform:scaleX(1.2417);">108110</span>
<span class="t" style="left:1176.70px;top:341.00px;font-size:17.5px;color:#000;transform:scaleX(1.2905);">can_direct_beam</span>
<span class="t" style="left:1360.16px;top:341.00px;font-size:17.5px;color:#000;transform:scaleX(1.2419);">108110</span>
<span class="t" style="left:1441.90px;top:341.00px;font-size:17.5px;color:#000;transform:scaleX(1.3291);">output_as</span>
<span class="t" style="left:1552.50px;top:341.00px;font-size:17.5px;color:#000;transform:scaleX(1.2703);">A3_dirBeam</span>
<span class="t" style="left:1699.97px;top:341.00px;font-size:17.5px;color:#000;transform:scaleX(1.3274);">user_file</span>
<span class="t" style="left:54.00px;top:367.00px;font-size:17.5px;color:#000;transform:scaleX(1.2345);">sample_sans</span>
<span class="t" style="left:191.96px;top:367.00px;font-size:17.5px;color:#ff0000;transform:scaleX(1.2389);">108125</span>
<span class="t" style="left:273.80px;top:367.00px;font-size:17.5px;color:#000;transform:scaleX(1.2801);">sample_trans</span>
<span class="t" style="left:418.78px;top:367.00px;font-size:17.5px;color:#ff0000;transform:scaleX(1.2209);">108124</span>
<span class="t" style="left:500.90px;top:367.00px;font-size:17.5px;color:#000;transform:scaleX(1.2930);">sample_direct_beam</span>
<span class="t" style="left:722.96px;top:367.00px;font-size:17.5px;color:#000;transform:scaleX(1.2419);">108110</span>
<span class="t" style="left:803.60px;top:367.00px;font-size:17.5px;color:#000;transform:scaleX(1.2040);">can_sans</span>
<span class="t" style="left:905.53px;top:367.00px;font-size:17.5px;color:#2e75b6;font-weight:700;transform:scaleX(1.2668);">108111</span>
<span class="t" style="left:987.20px;top:367.00px;font-size:17.5px;color:#000;transform:scaleX(1.2684);">can_trans</span>
<span class="t" style="left:1095.66px;top:367.00px;font-size:17.5px;color:#2e75b6;font-weight:700;transform:scaleX(1.2417);">108110</span>
<span class="t" style="left:1176.70px;top:367.00px;font-size:17.5px;color:#000;transform:scaleX(1.2905);">can_direct_beam</span>
<span class="t" style="left:1360.16px;top:367.00px;font-size:17.5px;color:#000;transform:scaleX(1.2419);">108110</span>
<span class="t" style="left:1441.90px;top:367.00px;font-size:17.5px;color:#000;transform:scaleX(1.3291);">output_as</span>
<span class="t" style="left:1552.07px;top:367.00px;font-size:17.5px;color:#000;transform:scaleX(1.2281);">DCH_dirBeam</span>
<span class="t" style="left:1699.97px;top:367.00px;font-size:17.5px;color:#000;transform:scaleX(1.3274);">user_file</span>
<span class="t" style="left:157.82px;top:445.01px;font-size:20.5px;color:#217346;font-weight:700;transform:scaleX(1.1795);">batch_Tutorial</span>
<span class="t" style="left:9.31px;top:483.01px;font-size:15px;color:#555;transform:scaleX(1.1853);">Ready</span>
</div>
</body></html>
